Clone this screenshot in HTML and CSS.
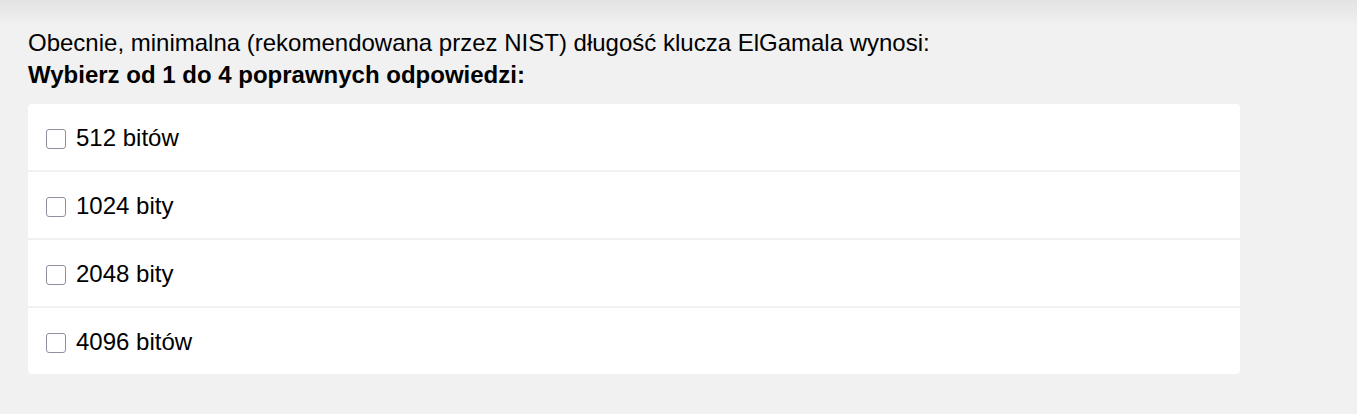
FILE: index.html
```html
<!DOCTYPE html>
<html lang="pl">
<head>
<meta charset="utf-8">
<title>Pytanie</title>
<link rel="stylesheet" href="styles.css">
</head>
<body>
<div class="page">
  <div class="question">
    <div class="prompt">Obecnie, minimalna (rekomendowana przez NIST) długość klucza ElGamala wynosi:</div>
    <div class="hint">Wybierz od 1 do 4 poprawnych odpowiedzi:</div>
  </div>
  <div class="answers">
    <label class="answer"><input type="checkbox" class="box"><span class="label-text">512 bitów</span></label>
    <label class="answer"><input type="checkbox" class="box"><span class="label-text">1024 bity</span></label>
    <label class="answer"><input type="checkbox" class="box"><span class="label-text">2048 bity</span></label>
    <label class="answer"><input type="checkbox" class="box"><span class="label-text">4096 bitów</span></label>
  </div>
</div>
</body>
</html>
```
FILE: styles.css
```css
html, body {
  margin: 0;
  padding: 0;
  height: 100%;
}
body {
  background: linear-gradient(#e3e3e3 0px, #f1f1f1 26px) no-repeat, #f1f1f1;
  font-family: "Liberation Sans", Arial, sans-serif;
  color: #000;
}
.page {
  padding: 27px 0 0 28px;
}
.question {
  font-size: 24px;
  line-height: 32px;
}
.hint {
  font-weight: bold;
}
.answers {
  margin-top: 13px;
  width: 1212px;
  display: flex;
  flex-direction: column;
  gap: 2px;
  border-radius: 4px;
  overflow: hidden;
}
.answer {
  background: #fff;
  height: 66px;
  box-sizing: border-box;
  padding: 4px 0 0 18px;
  display: flex;
  align-items: center;
  gap: 10px;
  font-size: 24px;
  line-height: 30px;
}
.label-text {
  padding-bottom: 2px;
}
.box {
  appearance: none;
  -webkit-appearance: none;
  margin: 0;
  width: 20px;
  height: 20px;
  box-sizing: border-box;
  border: 1px solid #8f8f9d;
  border-radius: 3px;
  background: #fff;
  flex: none;
}
```
